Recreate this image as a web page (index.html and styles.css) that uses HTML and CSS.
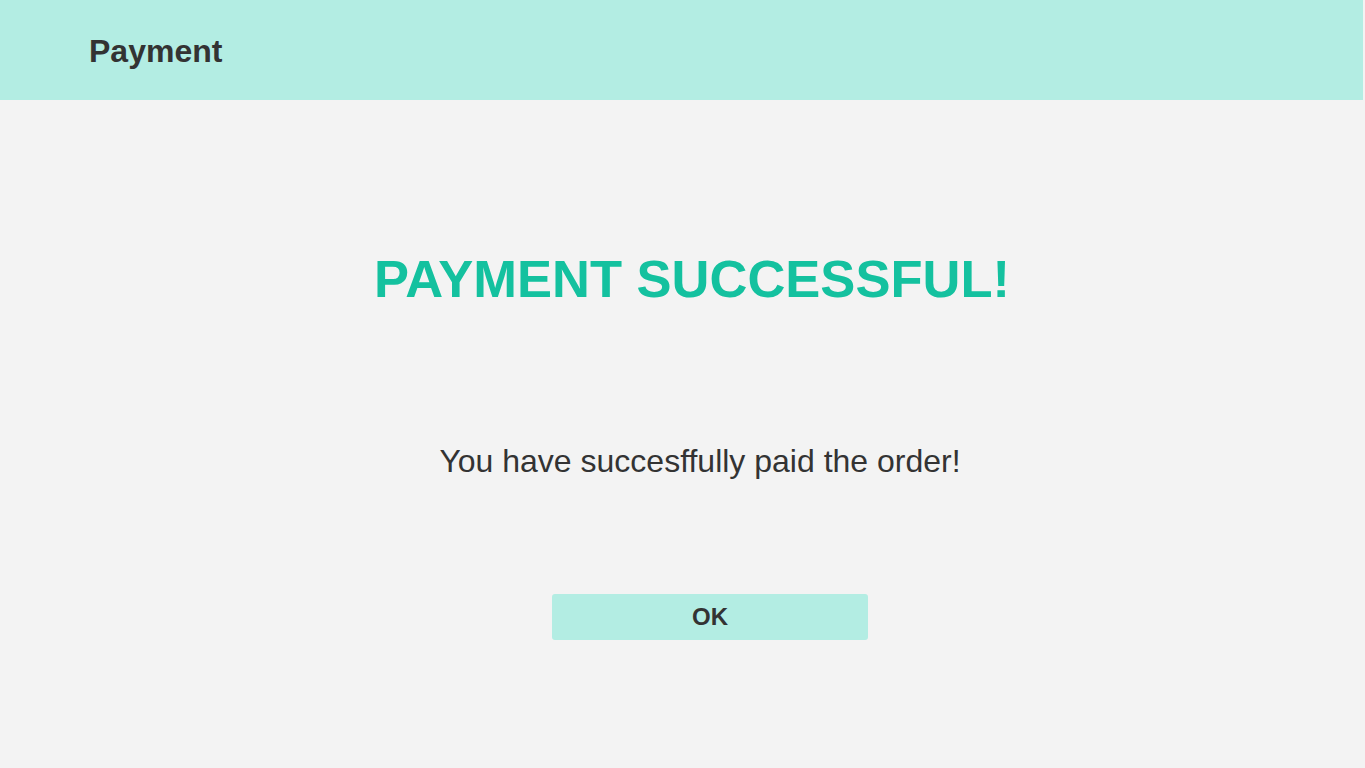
FILE: index.html
```html
<!DOCTYPE html>
<html lang="en">
<head>
<meta charset="utf-8">
<title>Payment</title>
<link rel="stylesheet" href="styles.css">
</head>
<body>
<header class="topbar">
  <h1 class="topbar-title">Payment</h1>
</header>
<main class="content">
  <h2 class="success-title">PAYMENT SUCCESSFUL!</h2>
  <p class="success-text">You have succesffully paid the order!</p>
  <button class="ok-button" type="button">OK</button>
</main>
</body>
</html>
```
FILE: styles.css
```css
html, body {
  margin: 0;
  padding: 0;
  background: #f3f3f3;
  font-family: "Liberation Sans", Arial, sans-serif;
  color: #333333;
}

.topbar {
  height: 100px;
  box-sizing: border-box;
  margin-right: 2px;
  padding: 33px 0 0 89px;
  background: #b3ede3;
}

.topbar-title {
  margin: 0;
  font-size: 32px;
  line-height: 36px;
  font-weight: bold;
  color: #333333;
}

.content {
  display: flex;
  flex-direction: column;
  align-items: center;
}

.success-title {
  margin: 149px 0 0 19px;
  font-size: 52.5px;
  line-height: 60px;
  font-weight: bold;
  color: #14c19f;
}

.success-text {
  margin: 134px 0 0 35px;
  font-size: 32px;
  line-height: 37px;
  color: #333333;
}

.ok-button {
  margin: 114px 0 0 55px;
  width: 316px;
  height: 46px;
  border: none;
  border-radius: 3px;
  background: #b3ede3;
  font-family: "Liberation Sans", Arial, sans-serif;
  font-size: 24px;
  font-weight: bold;
  color: #333333;
  padding: 0;
  cursor: pointer;
}
```
